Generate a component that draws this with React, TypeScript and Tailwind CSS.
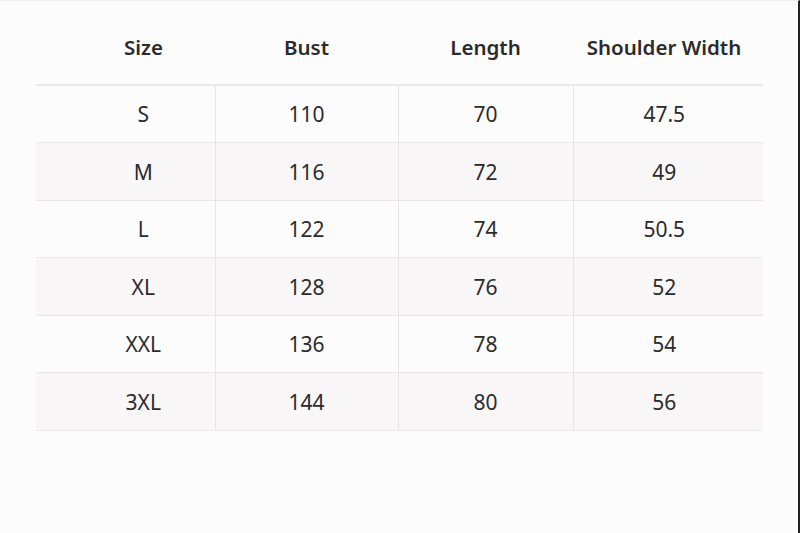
import React from 'react';

const rows = [
  ['S', '110', '70', '47.5'],
  ['M', '116', '72', '49'],
  ['L', '122', '74', '50.5'],
  ['XL', '128', '76', '52'],
  ['XXL', '136', '78', '54'],
  ['3XL', '144', '80', '56'],
];

const headers = ['Size', 'Bust', 'Length', 'Shoulder Width'];

export default function App() {
  return (
    <div
      className="w-[800px] h-[533px] bg-[#fdfcfd] border-r-2 border-r-[#222] border-t border-t-[#f0eef0] overflow-hidden"
      style={{ fontFamily: '"Noto Sans", "Open Sans", sans-serif' }}
    >
      <div className="pl-[36px] pr-[35px]">
        <table className="w-full border-collapse text-[#2b2b2b]">
          <colgroup>
            <col className="w-[179px]" />
            <col className="w-[183px]" />
            <col className="w-[175px]" />
            <col className="w-[190px]" />
          </colgroup>
          <thead>
            <tr className="h-[84px] border-b-2 border-b-[#ebe9ea]">
              {headers.map((h, i) => (
                <th
                  key={h}
                  className={`pt-[9px] text-[20.5px] font-[560] text-center ${i === 0 ? 'pl-[36px]' : ''} ${i === 3 ? 'pr-[8px]' : ''}`}
                >
                  {h}
                </th>
              ))}
            </tr>
          </thead>
          <tbody>
            {rows.map((r, ri) => (
              <tr
                key={r[0]}
                className={`h-[57.5px] border-b border-b-[#e9e7e8] ${ri % 2 === 1 ? 'bg-[#f8f6f7]' : 'bg-[#fdfcfd]'}`}
              >
                {r.map((c, ci) => (
                  <td
                    key={ci}
                    className={`pt-[2px] text-[21px] text-center ${ci < 3 ? 'border-r border-r-[#e6e4e5]' : ''} ${ci === 0 ? 'pl-[36px]' : ''} ${ci === 3 ? 'pr-[8px]' : ''}`}
                  >
                    {c}
                  </td>
                ))}
              </tr>
            ))}
          </tbody>
        </table>
      </div>
    </div>
  );
}
